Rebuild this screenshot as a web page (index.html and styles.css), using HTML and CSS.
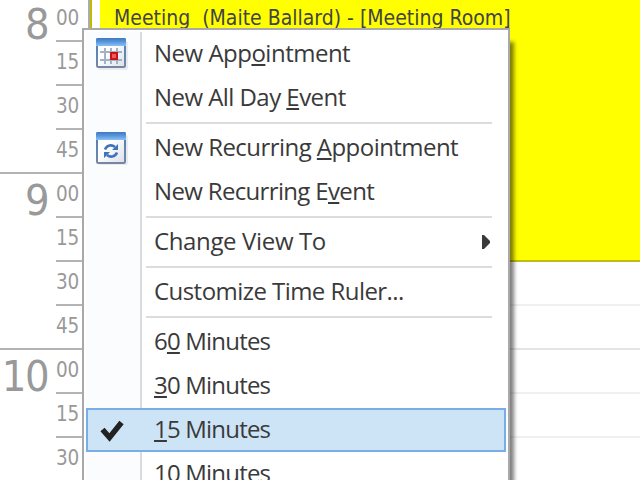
FILE: index.html
```html
<!DOCTYPE html>
<html lang="en">
<head>
    <meta charset="UTF-8">
    <meta name="viewport" content="width=device-width, initial-scale=1.0">
    <title>Scheduler</title>
    <link rel="stylesheet" href="styles.css">
</head>
<body>
    <div class="scheduler">
        <div class="ruler">
            <div class="hour">
                <span class="hour-label">8</span>
                <div class="slots"><span>00</span><span>15</span><span>30</span><span>45</span></div>
            </div>
            <div class="hour">
                <span class="hour-label">9</span>
                <div class="slots"><span>00</span><span>15</span><span>30</span><span>45</span></div>
            </div>
            <div class="hour">
                <span class="hour-label">10</span>
                <div class="slots"><span>00</span><span>15</span><span>30</span></div>
            </div>
        </div>
        <div class="day">
            <div class="event"><span class="event-title">Meeting&nbsp; (Maite Ballard) - [Meeting Room]</span></div>
            <div class="cell"></div>
            <div class="cell hour-end"></div>
            <div class="cell"></div>
            <div class="cell"></div>
        </div>
    </div>

    <ul class="menu">
        <li>
            <svg class="icon" width="32" height="34" viewBox="0 0 32 34">
                <defs>
                    <linearGradient id="bar" x1="0" y1="0" x2="0" y2="1">
                        <stop offset="0" stop-color="#3f78c0"/>
                        <stop offset="0.45" stop-color="#5694dc"/>
                        <stop offset="1" stop-color="#8cc0f4"/>
                    </linearGradient>
                    <linearGradient id="frame" x1="0" y1="0" x2="0" y2="1">
                        <stop offset="0" stop-color="#4a80c0"/>
                        <stop offset="1" stop-color="#7488a4"/>
                    </linearGradient>
                    <linearGradient id="page" x1="0" y1="0" x2="1" y2="1">
                        <stop offset="0.4" stop-color="#ffffff"/>
                        <stop offset="1" stop-color="#dcdfe6"/>
                    </linearGradient>
                </defs>
                <rect x="2" y="3" width="30" height="29" rx="2" fill="#e9ebef"/>
                <rect x="1" y="1" width="28" height="28" rx="1.5" fill="url(#page)" stroke="url(#frame)" stroke-width="2"/>
                <path d="M1 0H29L30 1V8H0V1Z" fill="url(#bar)"/>
                <path d="M9 10V26M15 10V26M21 10V26M4 14H26M4 22H26" stroke="#a3b1c5" stroke-width="2"/>
                <rect x="15" y="15" width="6" height="6" fill="#f05a5a" stroke="#c81414" stroke-width="2"/>
            </svg>
            <span class="text w-app">New App<u>o</u>intment</span>
        </li>
        <li><span class="text w-all">New All Day <u>E</u>vent</span></li>
        <li class="separator"></li>
        <li>
            <svg class="icon" width="32" height="34" viewBox="0 0 32 34">
                <rect x="2" y="3" width="30" height="30" rx="2" fill="#e9ebef"/>
                <rect x="1" y="1" width="28" height="30" rx="1.5" fill="url(#page)" stroke="url(#frame)" stroke-width="2"/>
                <path d="M1 0H29L30 1V8H0V1Z" fill="url(#bar)"/>
                <path d="M9 17.5C11 12.5 16 12.5 19 15M21 20.5C19 25.5 14 25.5 11 23" fill="none" stroke="#3f74bc" stroke-width="2.6"/>
                <path d="M22 12V18H16ZM8 26V20H14Z" fill="#3f74bc"/>
            </svg>
            <span class="text w-rapp">New Recurring <u>A</u>ppointment</span>
        </li>
        <li><span class="text w-rev">New Recurring E<u>v</u>ent</span></li>
        <li class="separator"></li>
        <li>
            <span class="text w-view">Change View To</span>
            <svg class="arrow" width="8" height="14" viewBox="0 0 8 14"><path d="M0 0H2L8 6V8L2 14H0Z" fill="#3a3a3a"/></svg>
        </li>
        <li class="separator"></li>
        <li><span class="text w-ruler">Customize Time Ruler...</span></li>
        <li class="separator"></li>
        <li><span class="text w-min">6<u>0</u> Minutes</span></li>
        <li><span class="text w-min"><u>3</u>0 Minutes</span></li>
        <li class="selected">
            <svg class="check" width="24" height="22" viewBox="0 0 24 22"><path d="M2.5 9.5L9.5 17.5L21.5 2.5" fill="none" stroke="#222" stroke-width="5.5"/></svg>
            <span class="text w-min"><u>1</u>5 Minutes</span>
        </li>
        <li><span class="text w-min">10 Minutes</span></li>
    </ul>
</body>
</html>
```
FILE: styles.css
```css
body {
    margin: 0;
    width: 640px;
    height: 480px;
    overflow: hidden;
    position: relative;
    background-color: #fff;
    font-family: "Open Sans", sans-serif;
}
.scheduler {
    display: flex;
    height: 480px;
    overflow: hidden;
}
.ruler {
    width: 88px;
    flex: none;
    border-right: 2px solid #acacac;
    font-family: "DejaVu Sans Condensed", "DejaVu Sans", sans-serif;
    color: #999;
}
.hour {
    display: flex;
    justify-content: flex-end;
    height: 176px;
    box-sizing: border-box;
    border-bottom: 2px solid #b4b4b4;
}
.hour:first-child {
    height: 174px;
}
.hour:last-child {
    height: 130px;
    border-bottom: none;
}
.hour:first-child .slots {
    margin-top: -2px;
}
.hour:first-child .hour-label {
    line-height: 49px;
}
.hour-label {
    height: 48px;
    font-size: 43px;
    line-height: 53px;
    letter-spacing: -1.5px;
    margin-right: 8px;
}
.slots {
    width: 32px;
    display: flex;
    flex-direction: column;
}
.slots span {
    flex: none;
    height: 44px;
    box-sizing: border-box;
    border-bottom: 2px solid #b4b4b4;
    font-size: 20.5px;
    line-height: 41px;
    letter-spacing: -0.3px;
}
.slots span:last-child {
    border-bottom: none;
}
.hour:not(:last-child) .slots span:last-child {
    height: 42px;
}
.day {
    flex: 1;
    border-left: 2px solid #c1bb00;
}
.event {
    height: 262px;
    box-sizing: border-box;
    margin-left: 8px;
    padding-left: 14px;
    background-color: #ff0;
    border-bottom: 2px solid #c0bc10;
}
.event-title {
    display: block;
    font-family: "DejaVu Sans Condensed", "DejaVu Sans", sans-serif;
    font-size: 21px;
    line-height: 37px;
    color: #444;
    white-space: nowrap;
}
.cell {
    height: 44px;
    box-sizing: border-box;
    border-bottom: 2px solid #f0f0f0;
}
.cell.hour-end {
    border-bottom-color: #e4e4e4;
}
.menu {
    position: absolute;
    left: 82px;
    top: 28px;
    width: 428px;
    height: 452px;
    overflow: hidden;
    box-sizing: border-box;
    margin: 0;
    padding: 2px 2px 0;
    list-style: none;
    border: 2px solid #a9a9a9;
    border-bottom: none;
    background: linear-gradient(to right, transparent 2px, #fbfcfe 2px, #fbfcfe 56px, #d9dbdf 56px, #d9dbdf 58px, transparent 58px) 0 2px no-repeat #fff;
    box-shadow: 5px 13px 4px -1px rgba(0, 0, 0, 0.5);
}
.menu li {
    display: flex;
    align-items: center;
    position: relative;
    height: 44px;
    box-sizing: border-box;
    padding-left: 68px;
}
.menu .separator {
    height: 6px;
    padding: 0 14px 0 60px;
}
.separator::before {
    content: "";
    flex: 1;
    height: 2px;
    background-color: #dcdcdc;
}
.menu .selected {
    border: 2px solid #78aee5;
    background-color: #cde4f7;
    padding-left: 66px;
}
.text {
    font-size: 24px;
    line-height: 36px;
    padding-bottom: 2px;
    color: #3a3a3a;
    white-space: nowrap;
}
.text u {
    text-decoration-thickness: 2px;
    text-underline-offset: 2px;
    text-decoration-skip-ink: none;
}
.w-app { letter-spacing: -0.5px; }
.w-all { letter-spacing: -0.55px; }
.w-rapp { letter-spacing: -0.55px; }
.w-rev { letter-spacing: -0.66px; }
.w-view { letter-spacing: -0.36px; }
.w-ruler { letter-spacing: -0.55px; }
.w-min { letter-spacing: -0.8px; }
.icon {
    position: absolute;
    left: 10px;
    top: 6px;
}
.arrow {
    margin-left: auto;
    margin-right: 16px;
}
.check {
    position: absolute;
    left: 12px;
    top: 10px;
}
```
